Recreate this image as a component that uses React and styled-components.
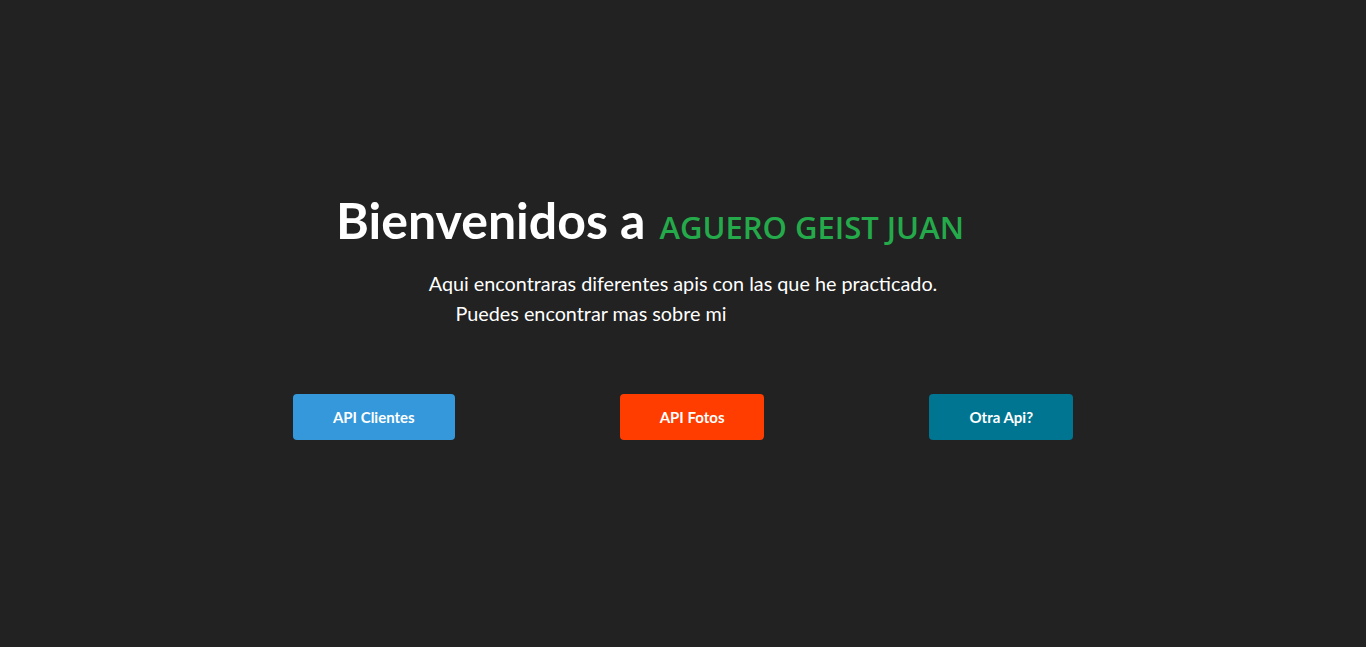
import React from "react";
import styled, { createGlobalStyle } from "styled-components";

const GlobalStyle = createGlobalStyle`
  * {
    box-sizing: border-box;
  }
  body {
    margin: 0;
    background-color: #222222;
    font-family: "Lato", "Liberation Sans", sans-serif;
  }
`;

const Contenedor = styled.main`
  width: 100%;
  height: 647px;
  display: flex;
  flex-direction: column;
  align-items: center;
  padding-top: 186px;
  color: #ffffff;
`;

const Titulo = styled.h1`
  margin: 0;
  padding-right: 66px;
  font-size: 50px;
  font-weight: 700;
  line-height: 68px;
  text-align: center;
  color: #ffffff;
`;

const Nombre = styled.span`
  margin-left: 14px;
  font-family: "Open Sans", "Liberation Sans", sans-serif;
  font-size: 31px;
  font-weight: 600;
  color: #24aa4a;
`;

const Texto = styled.p`
  margin: 0;
  padding-right: ${(p) => p.$corrimiento || 0}px;
  font-size: 19.8px;
  line-height: 30px;
  text-align: center;
`;

const Descripcion = styled.div`
  margin-top: 7px;
  display: flex;
  flex-direction: column;
  align-items: center;
`;

const ContenedorBtns = styled.div`
  margin-top: 66px;
  display: flex;
  justify-content: center;
  gap: 165px;
`;

const Btn = styled.button`
  height: 46px;
  padding: 0 40px;
  border: none;
  border-radius: 4px;
  background-color: ${(p) => p.$color};
  color: #ffffff;
  font-family: "Lato", "Liberation Sans", sans-serif;
  font-size: 15px;
  font-weight: 700;
  cursor: pointer;
`;

const App = () => {
  return (
    <>
      <GlobalStyle />
      <Contenedor>
        <Titulo>
          Bienvenidos a<Nombre>AGUERO GEIST JUAN</Nombre>
        </Titulo>
        <Descripcion>
          <Texto>Aqui encontraras diferentes apis con las que he practicado.</Texto>
          <Texto $corrimiento={184}>Puedes encontrar mas sobre mi</Texto>
        </Descripcion>
        <ContenedorBtns>
          <Btn $color="#3498db">API Clientes</Btn>
          <Btn $color="#ff3d00">API Fotos</Btn>
          <Btn $color="#007591">Otra Api?</Btn>
        </ContenedorBtns>
      </Contenedor>
    </>
  );
};

export default App;
